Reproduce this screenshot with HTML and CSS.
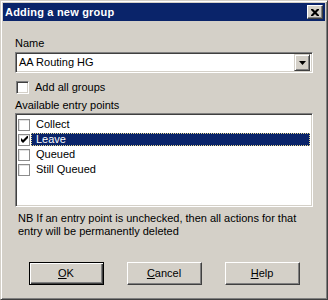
FILE: index.html
```
<!DOCTYPE html>
<html>
  <head>
    <meta charset="utf-8">
    <title>Adding a new group</title>
    <link rel="stylesheet" href="styles.css">
  </head>
  <body>
    <div class="window">
      <!-- TITLE BAR -->
      <div class="titlebar">
        <span class="title">Adding a new group</span>
        <div class="close-btn">
          <svg width="8" height="7" viewBox="0 0 8 7">
            <path d="M0 0h2l2 2 2-2h2v1l-2.5 2.5L8 6v1H6L4 5 2 7H0V6l2.5-2.5L0 1z" fill="#000"/>
          </svg>
        </div>
      </div>
      <!-- FORM -->
      <div class="content">
        <div class="label label-name">Name</div>
        <div class="combo">
          <div class="combo-text">AA Routing HG</div>
          <div class="combo-btn">
            <svg width="7" height="4" viewBox="0 0 7 4"><path d="M0 0h7L3.5 4z" fill="#000"/></svg>
          </div>
        </div>
        <div class="check-row">
          <div class="checkbox"></div>
          <span>Add all groups</span>
        </div>
        <div class="label label-list">Available entry points</div>
        <div class="listbox">
          <div class="list-item">
            <div class="list-check"></div>
            <span class="item-text">Collect</span>
          </div>
          <div class="list-item">
            <div class="list-check">
              <svg width="7" height="7" viewBox="0 0 7 7"><path d="M0 2l2 2 5-5v3L2 7 0 5z" fill="#000"/></svg>
            </div>
            <span class="item-text selected">Leave</span>
          </div>
          <div class="list-item">
            <div class="list-check"></div>
            <span class="item-text">Queued</span>
          </div>
          <div class="list-item">
            <div class="list-check"></div>
            <span class="item-text">Still Queued</span>
          </div>
        </div>
        <p class="note">NB If an entry point is unchecked, then all actions for that entry will be permanently deleted</p>
        <div class="buttons">
          <div class="btn default"><span><u>O</u>K</span></div>
          <div class="btn"><span><u>C</u>ancel</span></div>
          <div class="btn"><span><u>H</u>elp</span></div>
        </div>
      </div>
    </div>
  </body>
</html>
```
FILE: styles.css
```
/* RESET */
html, body { margin: 0; padding: 0; }
body {
  width: 328px;
  height: 300px;
  overflow: hidden;
  font-family: "Liberation Sans", Arial, sans-serif;
  font-size: 11px;
  line-height: 13px;
  color: #000;
  background: #d4d0c8;
}
/* WINDOW FRAME */
.window {
  box-sizing: border-box;
  width: 328px;
  height: 300px;
  background: #d4d0c8;
  border: 1px solid;
  border-color: #d4d0c8 #404040 #404040 #d4d0c8;
  box-shadow: inset 1px 1px 0 #fff, inset -1px -1px 0 #808080;
  padding: 2px;
}
/* TITLE BAR */
.titlebar {
  height: 18px;
  background: #0a246a;
  display: flex;
  align-items: center;
  justify-content: space-between;
  padding: 0 2px 0 2px;
}
.title {
  color: #fff;
  font-weight: bold;
  font-size: 11px;
  letter-spacing: 0.2px;
}
.close-btn {
  box-sizing: border-box;
  width: 16px;
  height: 14px;
  background: #d4d0c8;
  border: 1px solid;
  border-color: #fff #404040 #404040 #fff;
  box-shadow: inset -1px -1px 0 #808080;
  display: flex;
  align-items: center;
  justify-content: center;
}
/* CONTENT */
.content {
  padding: 0 12px 0 12px;
}
.label-name { margin-top: 16px; }
.label-list { margin-top: 5px; }
/* COMBO */
.combo {
  box-sizing: border-box;
  height: 21px;
  margin-top: 2px;
  background: #fff;
  border: 1px solid;
  border-color: #808080 #fff #fff #808080;
  box-shadow: inset 1px 1px 0 #404040, inset -1px -1px 0 #d4d0c8;
  display: flex;
  align-items: center;
  padding: 2px;
}
.combo-text {
  flex: 1;
  padding-left: 1px;
}
.combo-btn {
  box-sizing: border-box;
  width: 16px;
  height: 17px;
  background: #d4d0c8;
  border: 1px solid;
  border-color: #d4d0c8 #404040 #404040 #d4d0c8;
  box-shadow: inset 1px 1px 0 #fff, inset -1px -1px 0 #808080;
  display: flex;
  align-items: center;
  justify-content: center;
}
/* CHECKBOX ROW */
.check-row {
  display: flex;
  align-items: center;
  margin-top: 8px;
}
.checkbox {
  box-sizing: border-box;
  width: 13px;
  height: 13px;
  margin-left: 1px;
  margin-right: 6px;
  background: #fff;
  border: 1px solid;
  border-color: #808080 #fff #fff #808080;
  box-shadow: inset 1px 1px 0 #404040, inset -1px -1px 0 #d4d0c8;
}
/* LIST */
.listbox {
  box-sizing: border-box;
  height: 94px;
  margin-top: 1px;
  background: #fff;
  border: 1px solid;
  border-color: #808080 #fff #fff #808080;
  box-shadow: inset 1px 1px 0 #404040, inset -1px -1px 0 #d4d0c8;
  padding: 3px 2px 2px 2px;
}
.list-item {
  display: flex;
  align-items: center;
  height: 15px;
}
.list-check {
  box-sizing: border-box;
  width: 12px;
  height: 12px;
  margin-left: 0;
  margin-right: 1px;
  border: 1px solid #8c8c8c;
  box-shadow: inset 1px 1px 0 #e2e2e2;
  background: #fff;
  display: flex;
  align-items: center;
  justify-content: center;
}
.item-text {
  flex: 1;
  line-height: 11px;
  padding: 0 4px;
  border: 1px dotted transparent;
}
.item-text.selected {
  background: #0a246a;
  color: #fff;
  border-color: #e4d68c;
}
/* NOTE */
.note {
  margin: 5px 0 0 3px;
}
/* BUTTONS */
.buttons {
  display: flex;
  justify-content: center;
  gap: 23px;
  margin-top: 24px;
  margin-left: -12px;
  margin-right: -12px;
}
.btn {
  box-sizing: border-box;
  width: 75px;
  height: 23px;
  background: #d4d0c8;
  border: 1px solid;
  border-color: #fff #404040 #404040 #fff;
  box-shadow: inset -1px -1px 0 #808080;
  display: flex;
  align-items: center;
  justify-content: center;
}
.btn.default {
  border: 1px solid #000;
  box-shadow: inset 1px 1px 0 #fff, inset -1px -1px 0 #404040, inset -2px -2px 0 #808080;
}
```
